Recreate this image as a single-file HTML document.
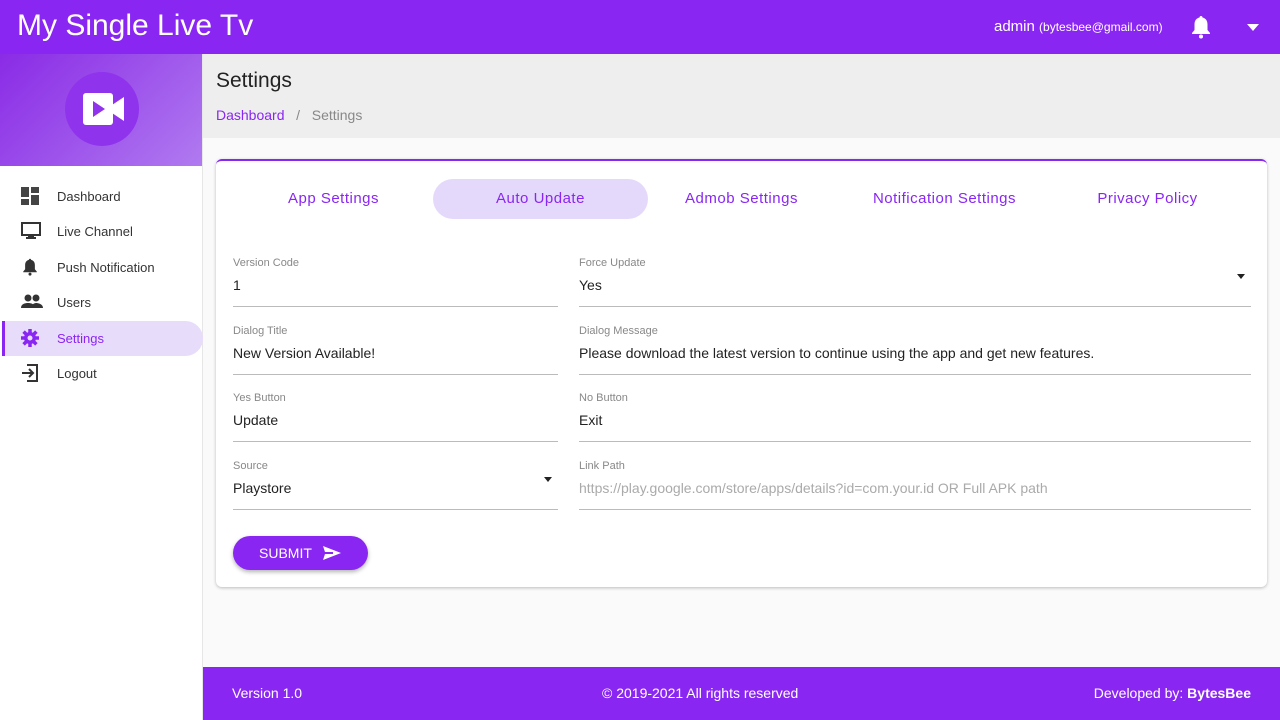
<!DOCTYPE html>
<html><head><meta charset="utf-8"><style>
*{margin:0;padding:0;box-sizing:border-box}
body{width:1280px;height:720px;overflow:hidden;font-family:"Liberation Sans",sans-serif;background:#fafafa;position:relative;color:#222}
.hdr{position:absolute;left:0;top:0;width:1280px;height:54px;background:#8a26f2;color:#fff}
.hdr .t{position:absolute;left:17px;top:9px;font-size:30px}
.hdr .u{position:absolute;left:994px;top:18px;font-size:15px}
.hdr .u small{font-size:12px}
.side{position:absolute;left:0;top:54px;width:203px;height:666px;background:#fff;border-right:1px solid #e6e6e6}
.logo{height:112px;background:linear-gradient(135deg,#8a2be6,#b07af0);position:relative}
.logo .c{position:absolute;left:65px;top:18px;width:74px;height:74px;border-radius:50%;background:#9033ec}
.nav{position:absolute;left:0;width:203px;height:35px;font-size:13px;color:#333}
.nav span{position:absolute;left:57px;top:10px}
.nav svg{position:absolute;left:21px;top:8px}
.nav.a{background:#e8dcfb;border-radius:0 18px 18px 0;color:#8a26f2;left:2px;width:201px;border-left:3px solid #8a26f2}
.band{position:absolute;left:203px;top:54px;width:1077px;height:84px;background:#eeeeee}
.band h1{position:absolute;left:13px;top:15px;font-size:21px;font-weight:normal;color:#222}
.band .bc{position:absolute;left:13px;top:53px;font-size:14px;color:#888}
.band .bc b{color:#8a26f2;font-weight:normal}
.card{position:absolute;left:216px;top:159px;width:1051px;height:428px;background:#fff;border-top:2px solid #8a26f2;border-radius:6px;box-shadow:0 1px 3px rgba(0,0,0,.25)}
.tab{position:absolute;top:18px;height:40px;width:215px;text-align:center;line-height:40px;font-size:15px;color:#8a26f2;letter-spacing:.5px;border-radius:20px}
.tab.a{background:#e5d9fb}
.f{position:absolute;border-bottom:1px solid #bbb;height:50px}
.f .l{position:absolute;top:0;font-size:11px;color:#888}
.f .v{position:absolute;top:20px;font-size:14px;color:#222}
.f .v.p{color:#aaa}
.f .dd{position:absolute;right:6px;top:17px;border:4px solid transparent;border-top:5px solid #222}
.btn{position:absolute;left:17px;top:375px;width:135px;height:34px;border-radius:17px;background:#8a26f2;color:#fff;font-size:14px;box-shadow:0 2px 4px rgba(0,0,0,.3)}
.btn span{position:absolute;left:26px;top:9px}
.ftr{position:absolute;left:203px;top:667px;width:1077px;height:53px;background:#8a26f2;color:#fff;font-size:14px}
.ftr div{position:absolute;top:18px}
</style></head><body>
<div class="hdr"><div class="t">My Single Live Tv</div>
<div class="u">admin <small>(bytesbee@gmail.com)</small></div>
<svg style="position:absolute;left:1190px;top:15px" width="22" height="24" viewBox="0 0 22 24"><path d="M11 1c1 0 1.5.7 1.5 1.5C16 3.3 17.5 6 17.5 9.5V15l2.5 3v1H2v-1l2.5-3V9.5C4.5 6 6 3.3 9.5 2.5 9.5 1.7 10 1 11 1z" fill="#fff"/><circle cx="11" cy="21.5" r="2" fill="#fff"/></svg>
<svg style="position:absolute;left:1247px;top:24px" width="12" height="7"><path d="M0 0h12L6 7z" fill="#fff"/></svg>
</div>
<div class="side"><div class="logo"><div class="c">
<svg style="position:absolute;left:18px;top:21px" width="42" height="32" viewBox="0 0 42 32"><rect x="0" y="0" width="30" height="32" rx="3" fill="#fff"/><path d="M29 12l12-8v24l-12-8z" fill="#fff"/><path d="M10 8l12 8-12 8z" fill="#9033ec"/></svg></div></div>
<div class="nav" style="top:125px"><svg width="18" height="18"><rect x="0" y="0" width="8" height="10" fill="#444"/><rect x="10" y="0" width="8" height="6" fill="#444"/><rect x="0" y="12" width="8" height="6" fill="#444"/><rect x="10" y="8" width="8" height="10" fill="#444"/></svg><span>Dashboard</span></div>
<div class="nav" style="top:160px"><svg width="20" height="18"><rect x="1" y="1" width="18" height="12" fill="none" stroke="#333" stroke-width="2"/><rect x="7" y="13" width="6" height="3" fill="#333"/><rect x="5" y="15" width="10" height="2" fill="#333"/></svg><span>Live Channel</span></div>
<div class="nav" style="top:196px"><svg width="18" height="18" viewBox="0 0 22 24"><path d="M11 1c1 0 1.5.7 1.5 1.5C16 3.3 17.5 6 17.5 9.5V15l2.5 3v1H2v-1l2.5-3V9.5C4.5 6 6 3.3 9.5 2.5 9.5 1.7 10 1 11 1z" fill="#333"/><circle cx="11" cy="21.5" r="2" fill="#333"/></svg><span>Push Notification</span></div>
<div class="nav" style="top:231px"><svg width="22" height="18"><circle cx="7" cy="5" r="3.5" fill="#333"/><circle cx="15" cy="5" r="3.5" fill="#333"/><path d="M0 15c0-4 4-5 7-5s7 1 7 5zM10 15c0-3 3-5 5-5s7 1 7 5z" fill="#333"/></svg><span>Users</span></div>
<div class="nav a" style="top:267px"><svg style="left:16px" width="18" height="18" viewBox="0 0 18 18"><circle cx="9" cy="9" r="6" fill="#8a26f2"/><g stroke="#8a26f2" stroke-width="3.5"><path d="M9 0v18M0 9h18M2.6 2.6l12.8 12.8M15.4 2.6L2.6 15.4"/></g><circle cx="9" cy="9" r="2.5" fill="#e8dcfb"/></svg><span style="left:52px">Settings</span></div>
<div class="nav" style="top:302px"><svg width="18" height="18"><path d="M6 1h10v16H6" fill="none" stroke="#333" stroke-width="2"/><path d="M1 9h10M8 5l4 4-4 4" fill="none" stroke="#333" stroke-width="2"/></svg><span>Logout</span></div>
</div>
<div class="band"><h1>Settings</h1><div class="bc"><b>Dashboard</b> &nbsp;&nbsp;/&nbsp;&nbsp; Settings</div></div>
<div class="card">
<div class="tab" style="left:10px">App Settings</div>
<div class="tab a" style="left:217px">Auto Update</div>
<div class="tab" style="left:418px">Admob Settings</div>
<div class="tab" style="left:621px">Notification Settings</div>
<div class="tab" style="left:824px">Privacy Policy</div>
<div class="f" style="left:17px;top:96px;width:325px"><div class="l">Version Code</div><div class="v">1</div></div>
<div class="f" style="left:363px;top:96px;width:672px"><div class="l">Force Update</div><div class="v">Yes</div><div class="dd"></div></div>
<div class="f" style="left:17px;top:164px;width:325px"><div class="l">Dialog Title</div><div class="v">New Version Available!</div></div>
<div class="f" style="left:363px;top:164px;width:672px"><div class="l">Dialog Message</div><div class="v">Please download the latest version to continue using the app and get new features.</div></div>
<div class="f" style="left:17px;top:231px;width:325px"><div class="l">Yes Button</div><div class="v">Update</div></div>
<div class="f" style="left:363px;top:231px;width:672px"><div class="l">No Button</div><div class="v">Exit</div></div>
<div class="f" style="left:17px;top:299px;width:325px"><div class="l">Source</div><div class="v">Playstore</div><div class="dd" style="right:6px"></div></div>
<div class="f" style="left:363px;top:299px;width:672px"><div class="l">Link Path</div><div class="v p">https://play.google.com/store/apps/details?id=com.your.id OR Full APK path</div></div>
<div class="btn"><span>SUBMIT</span><svg style="position:absolute;left:90px;top:10px" width="18" height="14"><path d="M0 0l18 7-18 7 2-6h8V6H2z" fill="#fff"/></svg></div>
</div>
<div class="ftr"><div style="left:29px">Version 1.0</div><div style="left:399px">© 2019-2021 All rights reserved</div><div style="right:29px">Developed by: <b>BytesBee</b></div></div>
</body></html>
